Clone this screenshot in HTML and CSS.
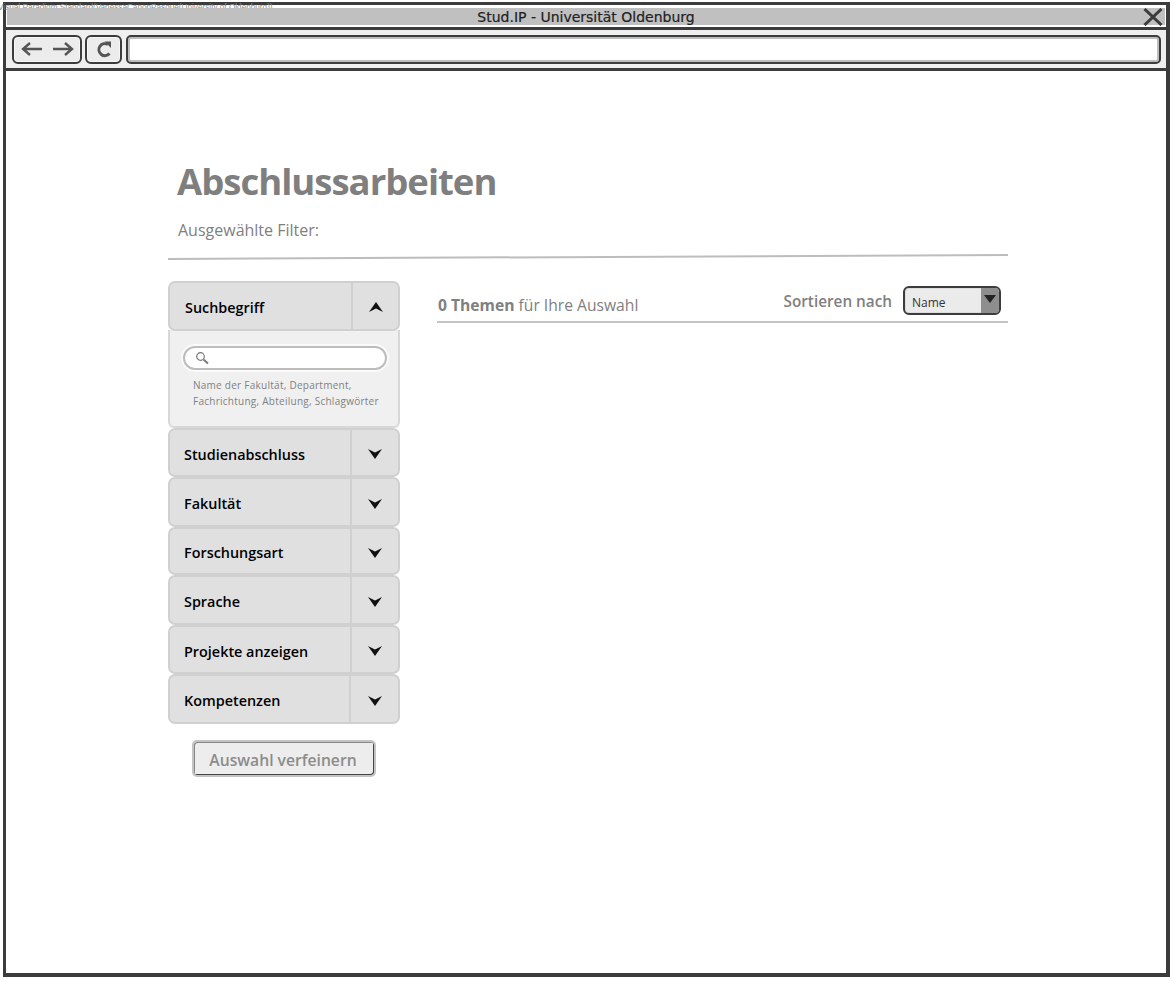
FILE: index.html
```html
<!DOCTYPE html>
<html lang="de">
<head>
<meta charset="utf-8">
<title>Stud.IP - Universität Oldenburg</title>
<link rel="stylesheet" href="styles.css">
</head>
<body>
<div class="watermark">Visual Paradigm Standard(VanessaCanonPasque(University of Oldenburg))</div>
<div class="window">
  <header class="titlebar">
    <span class="title">Stud.IP - Universität Oldenburg</span>
    <svg class="close" width="20" height="18" viewBox="0 0 20 18"><path d="M1.500 1 18.500 17M18.500 1 1.500 17" fill="none" stroke="#3c3c3c" stroke-width="3"/></svg>
  </header>
  <nav class="toolbar">
    <div class="tbtn nav">
      <svg width="23" height="18" viewBox="0 0 23 18"><path d="M22 9H3M10 3 3 9l7 6" fill="none" stroke="#555" stroke-width="2.400"/></svg>
      <svg width="23" height="18" viewBox="0 0 23 18"><path d="M1 9h19M13 3l7 6-7 6" fill="none" stroke="#555" stroke-width="2.400"/></svg>
    </div>
    <div class="tbtn reload">
      <svg width="18" height="18" viewBox="0 0 18 18"><path d="M14.500 13.500A6 6 0 1 1 13 4.500" fill="none" stroke="#555" stroke-width="3"/><path d="M9.500 1.500H16V8z" fill="#555"/></svg>
    </div>
    <div class="address"></div>
  </nav>
  <main class="page">
    <h1 class="heading">Abschlussarbeiten</h1>
    <p class="filters">Ausgewählte Filter:</p>
    <div class="rule"></div>
    <div class="columns">
      <aside class="sidebar">
        <section class="accordion">
          <div class="row open toggle-first">
            <span class="row-label">Suchbegriff</span>
            <span class="row-toggle"><svg width="14" height="11" viewBox="0 0 14 11"><path d="M7 0 14 10 7 6.500 0 10z" fill="#111"/></svg></span>
          </div>
          <div class="panel">
            <div class="search">
              <svg width="14" height="14" viewBox="0 0 14 14"><circle cx="5.500" cy="5.500" r="3.800" fill="none" stroke="#777" stroke-width="1.200"/><path d="m8.500 8.500 4.500 4" stroke="#777" stroke-width="1.800"/></svg>
            </div>
            <p class="hint">Name der Fakultät, Department, Fachrichtung, Abteilung, Schlagwörter</p>
          </div>
        </section>
        <div class="row h49"><span class="row-label">Studienabschluss</span><span class="row-toggle"><svg width="14" height="11" viewBox="0 0 14 11"><path d="M7 11 14 1 7 4.500 0 1z" fill="#111"/></svg></span></div>
        <div class="row h50"><span class="row-label">Fakultät</span><span class="row-toggle"><svg width="14" height="11" viewBox="0 0 14 11"><path d="M7 11 14 1 7 4.500 0 1z" fill="#111"/></svg></span></div>
        <div class="row h48"><span class="row-label">Forschungsart</span><span class="row-toggle"><svg width="14" height="11" viewBox="0 0 14 11"><path d="M7 11 14 1 7 4.500 0 1z" fill="#111"/></svg></span></div>
        <div class="row h50"><span class="row-label">Sprache</span><span class="row-toggle"><svg width="14" height="11" viewBox="0 0 14 11"><path d="M7 11 14 1 7 4.500 0 1z" fill="#111"/></svg></span></div>
        <div class="row h49"><span class="row-label">Projekte anzeigen</span><span class="row-toggle"><svg width="14" height="11" viewBox="0 0 14 11"><path d="M7 11 14 1 7 4.500 0 1z" fill="#111"/></svg></span></div>
        <div class="row h50 toggle-last"><span class="row-label">Kompetenzen</span><span class="row-toggle"><svg width="14" height="11" viewBox="0 0 14 11"><path d="M7 11 14 1 7 4.500 0 1z" fill="#111"/></svg></span></div>
        <div class="refine-wrap"><button class="refine" type="button">Auswahl verfeinern</button></div>
      </aside>
      <section class="results">
        <div class="results-head">
          <div class="count"><strong>0 Themen</strong> für Ihre Auswahl</div>
          <div class="sort">
            <span class="sort-label">Sortieren nach</span>
            <div class="select"><span class="select-value">Name</span><span class="select-arrow"><svg width="12" height="8" viewBox="0 0 12 8"><path d="M0 0h12L6 8z" fill="#222"/></svg></span></div>
          </div>
        </div>
      </section>
    </div>
  </main>
</div>
</body>
</html>
```
FILE: styles.css
```css
* { box-sizing: border-box; }
html, body { margin: 0; height: 100%; background: #fff; overflow: hidden; }
body { padding: 2px 4px 4px 3px; font-family: "Open Sans", sans-serif; }

.watermark {
  position: absolute; left: -2px; top: 3px;
  font: 8.200px/10px "Liberation Sans", sans-serif;
  color: #8c8c8c; white-space: nowrap;
}

.window { height: 975px; border: 3px solid #3c3c3c; border-right-width: 4px; border-bottom-width: 4px; display: flex; flex-direction: column; }

.titlebar {
  height: 17px; margin: 3px 1px 2px 1px; background: #c0c0c0;
  display: flex; align-items: center; justify-content: center; position: relative;
}
.title { font: 400 14px/17px "DejaVu Sans", sans-serif; color: #222; padding-top: 1px; -webkit-text-stroke: .2px #222; }
.close { position: absolute; right: 2px; top: 0; }

.toolbar {
  height: 44px; border-top: 3px solid #3c3c3c; border-bottom: 3px solid #3c3c3c;
  background: #efefef; display: flex; align-items: center; gap: 3px; padding: 0 5px 0 6px;
}
.tbtn {
  height: 29px; border: 2px solid #3c3c3c; border-radius: 6px; background: #ececec;
  box-shadow: inset 0 0 0 1px #f6f6f6;
  display: flex; align-items: center; justify-content: center;
}
.nav { width: 70px; gap: 9px; }
.reload { width: 37px; }
.address { flex: 1; height: 29px; margin-left: 1px; border: 2px solid #3c3c3c; border-radius: 5px; background: #fff; box-shadow: inset 0 0 0 2px #bdbdbd; }

.page { flex: 1; padding: 85px 0 0 162px; }

.heading { margin: 0 0 0 9px; font-size: 36.500px; line-height: 50px; font-weight: 700; letter-spacing: -1px; color: #7f7f7f; }
.filters { margin: 14px 0 0 10px; font-size: 16px; line-height: 20px; color: #808080; }
.rule { width: 840px; height: 2px; margin-top: 16px; background: #bdbdbd; transform: rotate(-.27deg); }

.columns { display: flex; margin-top: 23px; }

.sidebar { width: 232px; display: flex; flex-direction: column; }

.accordion { display: flex; flex-direction: column; }

.row {
  display: flex; align-items: center; background: #e0e0e0;
  border: 2px solid #d0d0d0; border-radius: 7px;
}
.open { height: 50px; position: relative; }
.h48 { height: 48px; }
.h49 { height: 49px; }
.h50 { height: 50px; }
.row-label { flex: 1; padding: 4px 0 0 14px; font-size: 14.400px; line-height: 20px; font-weight: 600; color: #000; }
.open .row-label { padding-left: 15px; }
.row-toggle { width: 48px; height: 100%; display: flex; align-items: center; justify-content: center; border-left: 2px solid #d0d0d0; padding-top: 2px; }
.toggle-first .row-toggle { width: 47px; }
.toggle-last .row-toggle { width: 49px; }

.panel {
  height: 98px; margin-top: -1px; background: #f0f0f0;
  border: 2px solid #d8d8d8; border-top: 0; border-radius: 0 0 6px 6px; padding: 16px 11px 0 13px;
}
.search {
  height: 24px; border: 2px solid #bdbdbd; border-radius: 12px; background: #fff;
  box-shadow: 0 0 0 2px #fafafa; display: flex; align-items: center; padding-left: 10px;
}
.hint { margin: 7px 0 0 10px; width: 200px; font-size: 10px; line-height: 16px; color: #808080; letter-spacing: .26px; }

.refine-wrap { padding: 16px 0 0 24px; }
.refine {
  width: 184px; height: 37px; padding: 3px 2px 0 0; border: 2px solid #c4c4c4; border-radius: 5px; background: #ededed;
  box-shadow: inset 1px 1px 0 #888, inset -1px -1px 0 #444;
  font: 600 15.700px/20px "Open Sans", sans-serif; color: #8c8c8c;
}

.results { margin-left: 37px; width: 571px; }
.results-head { height: 42px; border-bottom: 2px solid #c4c4c4; display: flex; justify-content: space-between; padding: 5px 7px 0 0; }
.count { padding-top: 9px; padding-left: 1px; font-size: 15.650px; line-height: 20px; color: #808080; }
.count strong { font-weight: 700; }
.sort { display: flex; gap: 11px; }
.sort-label { padding-top: 5px; font-size: 15.300px; line-height: 20px; font-weight: 600; color: #808080; }
.select {
  width: 98px; height: 29px; border: 2px solid #3c3c3c; border-radius: 6px; background: #ebebeb;
  display: flex; justify-content: space-between; overflow: hidden; box-shadow: inset 0 0 0 1px #ddd;
}
.select-value { padding: 6px 0 0 7px; font-size: 12px; line-height: 18px; color: #333; }
.select-arrow { width: 18px; background: #8e8e8e; display: flex; justify-content: center; padding-top: 7px; }
```
